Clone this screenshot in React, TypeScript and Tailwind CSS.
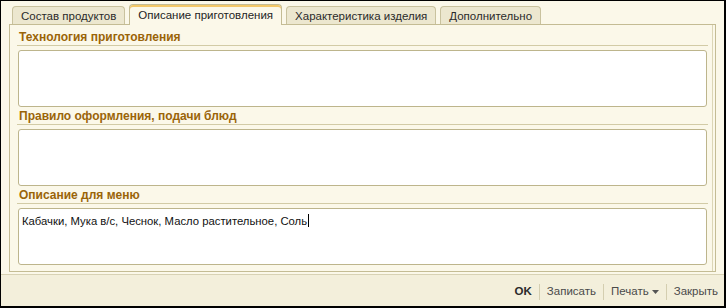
import React from "react";

const font = { fontFamily: '"Liberation Sans", Arial, sans-serif' };

function Tab({ label, active }: { label: string; active?: boolean }) {
  if (active) {
    return (
      <div className="relative z-10 -mb-px h-[21px] rounded-t-[4px] border border-b-0 border-[#c4bc94] bg-[#fbf8e9] px-[8px] pt-[4px] text-[11.5px] leading-[13px] text-[#1e1e1e] shadow-[inset_0_2px_0_#f3c768]">
        {label}
      </div>
    );
  }
  return (
    <div className="h-[18px] rounded-t-[4px] border border-b-0 border-[#c9c29e] bg-[#ece7cf] px-[8px] pt-[3px] text-[11.5px] leading-[13px] text-[#2a2a2a]">
      {label}
    </div>
  );
}

function Section({ label, text, cursor }: { label: string; text?: string; cursor?: boolean }) {
  return (
    <div className="flex flex-col">
      <div className="h-[18px] border-b border-[#d2cba6] pl-[2px] pt-[3px] text-[12px] font-bold leading-[13px] text-[#9a6408]">
        {label}
      </div>
      <div className="mx-[1px] mt-[4px] h-[57px] rounded-[3px] border border-[#bdb58c] bg-white px-[3px] pt-[3px] text-[11.3px] leading-[15px] text-[#111]">
        {text}
        {cursor && <span className="ml-px inline-block h-[13px] w-px translate-y-[2px] bg-black" />}
      </div>
    </div>
  );
}

export default function App() {
  return (
    <div style={font} className="h-[308px] w-[726px] border-l border-t border-r-2 border-b-2 border-black bg-[#fbf8e9]">
      <div className="flex h-full flex-col">
        <div className="flex h-[23px] items-end gap-[4px] pl-[11px] pt-[3px]">
          <Tab label="Состав продуктов" />
          <Tab label="Описание приготовления" active />
          <Tab label="Характеристика изделия" />
          <Tab label="Дополнительно" />
        </div>
        <div className="mx-[8px] h-[248px] border border-[#c4bc94] bg-[#fbf8e9] shadow-[inset_-2px_0_0_#fbf8e9,inset_-3px_0_0_#dcd6b6]">
          <div className="flex flex-col pl-[7px] pr-[7px] pt-[3px]">
            <Section label="Технология приготовления" />
            <Section label="Правило оформления, подачи блюд" />
            <Section label="Описание для меню" text="Кабачки, Мука в/с, Чеснок, Масло растительное, Соль" cursor />
          </div>
        </div>
        <div className="mt-[2px] flex flex-1 items-center justify-end border-t border-[#d8d2b4] bg-[#f3efdb] pr-[6px] pt-[3px] text-[11.5px] text-[#4a4a4a]">
          <span className="px-[7px] font-bold text-[#2a2a2a]">OK</span>
          <span className="h-[16px] w-px bg-[#d4ceb0]" />
          <span className="px-[7px]">Записать</span>
          <span className="h-[16px] w-px bg-[#d4ceb0]" />
          <span className="flex items-center px-[7px]">
            Печать
            <svg width="7" height="4" viewBox="0 0 7 4" className="ml-[3px]">
              <path d="M0 0h7L3.5 4z" fill="#555" />
            </svg>
          </span>
          <span className="h-[16px] w-px bg-[#d4ceb0]" />
          <span className="pl-[7px]">Закрыть</span>
        </div>
      </div>
    </div>
  );
}
